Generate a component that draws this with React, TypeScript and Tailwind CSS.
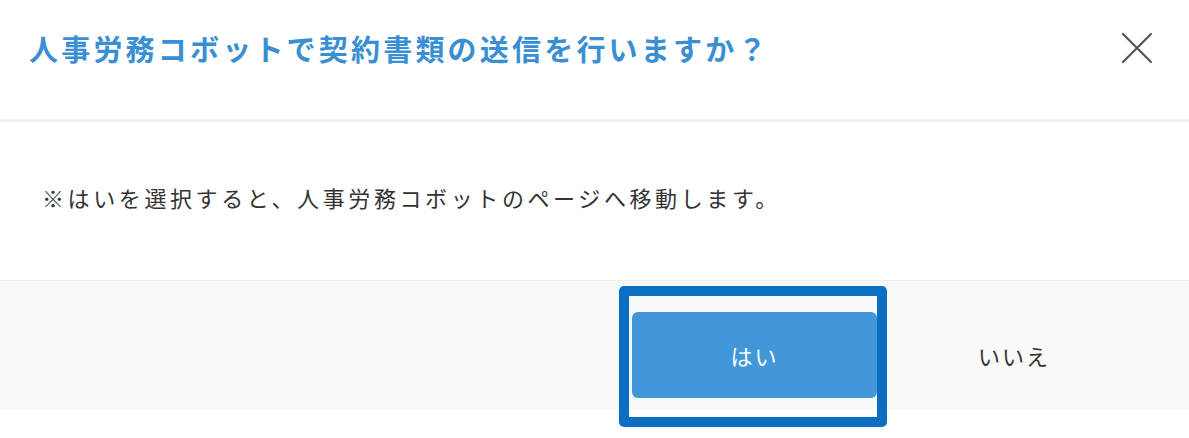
import React from "react";

const jp = '"Noto Sans CJK JP", "Noto Sans", "Liberation Sans", sans-serif';

function CloseIcon() {
  return (
    <svg width="32" height="32" viewBox="0 0 32 32" fill="none">
      <path d="M2 2 L30 30 M30 2 L2 30" stroke="#555555" strokeWidth="2.2" strokeLinecap="round" />
    </svg>
  );
}

export default function App() {
  return (
    <div className="w-[1189px] h-[438px] bg-white overflow-hidden relative" style={{ fontFamily: jp }}>
      {/* header */}
      <div className="h-[122px] flex items-start justify-between pl-[29px] pr-[36px] pt-[29px] border-b-[3px] border-[#eef0f2]">
        <h1 className="text-[29px] leading-[38px] font-bold tracking-[3.2px] text-[#3a8fd3]">
          人事労務コボットで契約書類の送信を行いますか？
        </h1>
        <button className="mt-[3px]">
          <CloseIcon />
        </button>
      </div>

      {/* body */}
      <div className="h-[158px] pl-[42px] pt-[60px]">
        <p className="text-[22px] leading-[30px] tracking-[3.6px] text-[#333333]">
          ※はいを選択すると、人事労務コボットのページへ移動します。
        </p>
      </div>

      {/* footer */}
      <div className="h-[130px] bg-[#f9f9f9] border-t border-[#eeeeee] flex items-start justify-end pt-[31px] pr-[139px]">
        <div className="relative">
          <button className="block w-[245px] h-[86px] rounded-[6px] bg-[#4197d7] text-white text-[22px] tracking-[2px]">
            はい
          </button>
          {/* highlight frame around the confirm button */}
          <div className="absolute left-[-13px] top-[-26px] w-[268px] h-[141px] border-[10px] border-[#0a6fc2] rounded-[5px] pointer-events-none" />
        </div>
        <div className="ml-[101px] h-[86px] flex items-center">
          <button className="text-[22px] tracking-[2px] text-[#333333]">いいえ</button>
        </div>
      </div>
    </div>
  );
}
